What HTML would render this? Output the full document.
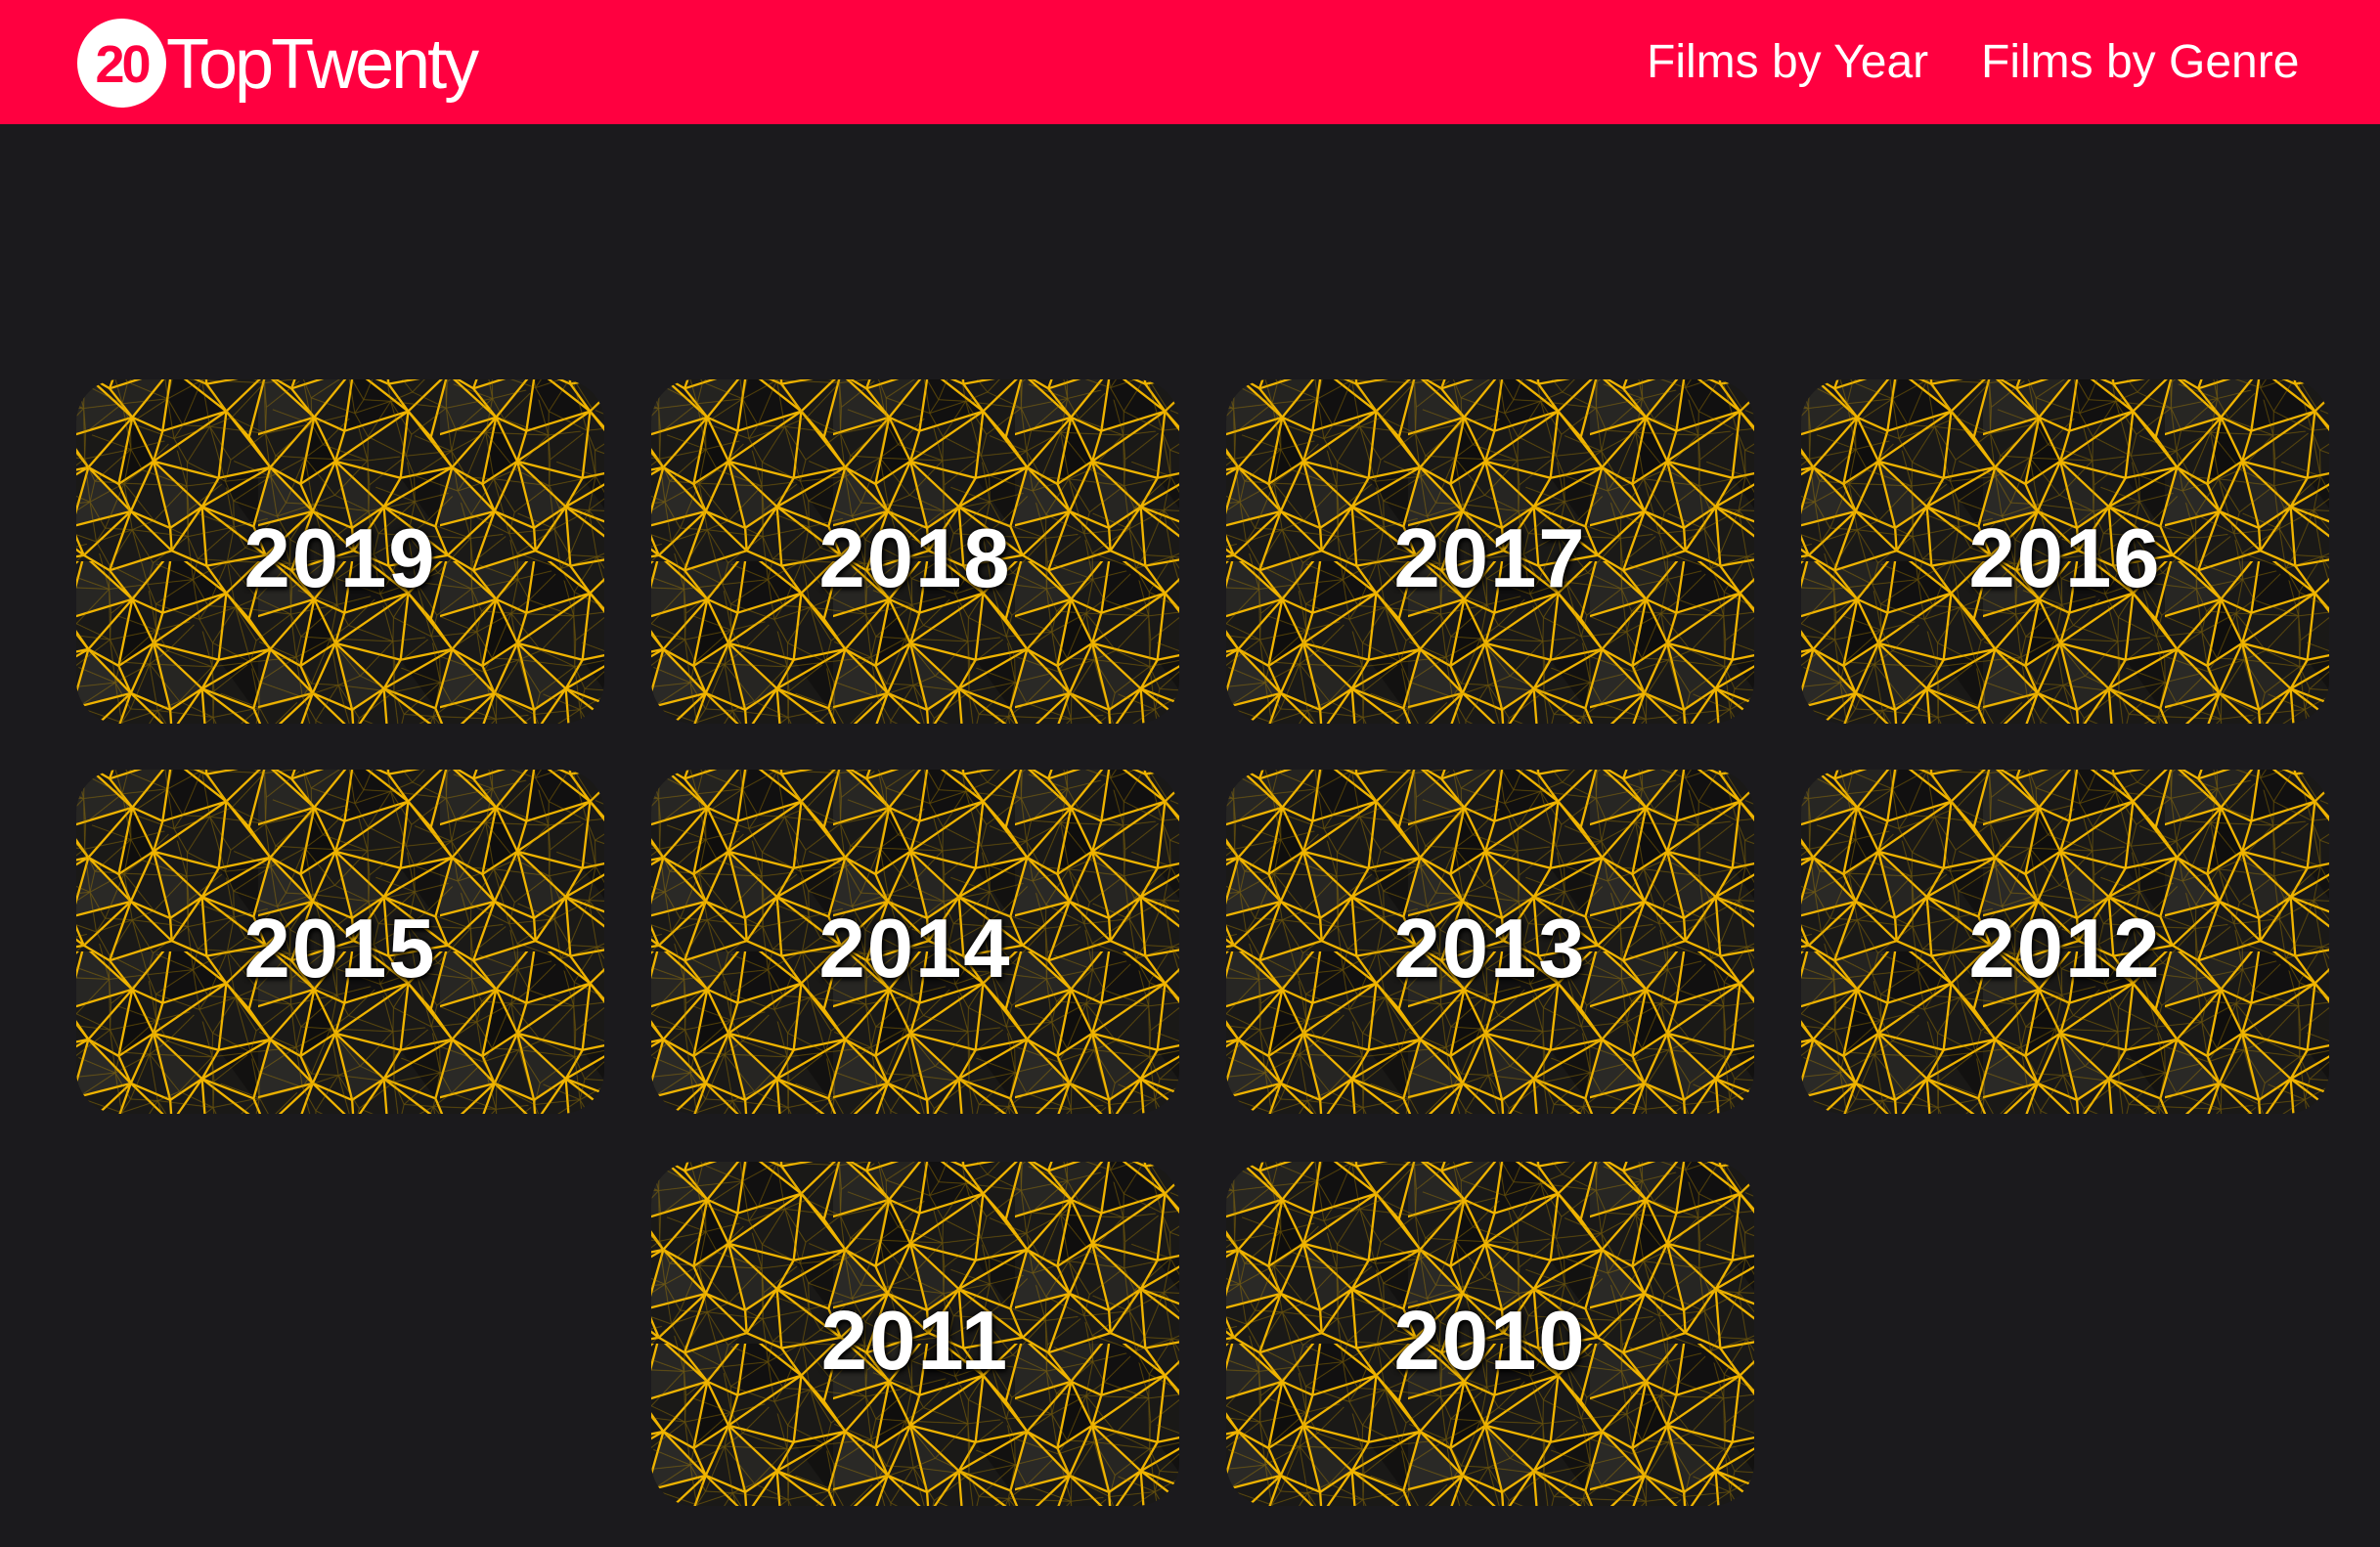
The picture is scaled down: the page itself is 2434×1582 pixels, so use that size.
<!DOCTYPE html>
<html><head><meta charset="utf-8">
<style>
html,body{margin:0;padding:0;}
body{width:2434px;height:1582px;background:#1b1a1d;position:relative;overflow:hidden;font-family:"Liberation Sans",sans-serif;}
.hdr{position:absolute;left:0;top:0;width:2434px;height:127px;background:#ff0040;}
.logo{position:absolute;left:79px;top:19px;width:91px;height:91px;border-radius:50%;background:#fff;}
.logo span{position:absolute;left:0;top:0;width:91px;line-height:91px;text-align:center;color:#ff0040;font-weight:bold;font-size:54px;letter-spacing:-3px;margin-top:2px;}
.brand{position:absolute;left:170px;top:18px;color:#fff;font-size:72px;letter-spacing:-3px;line-height:96px;}
.nav{position:absolute;top:34px;color:#fff;font-size:48px;line-height:60px;}
.card{position:absolute;width:540px;height:352px;border-radius:44px;overflow:hidden;background:#1a1917;}
.card svg{position:absolute;left:0;top:0;}
.card .y{position:absolute;left:0;top:0;width:540px;height:352px;line-height:368px;text-align:center;color:#fff;font-weight:bold;font-size:85px;letter-spacing:2px;text-shadow:0 0 6px rgba(0,0,0,.9),2px 3px 4px rgba(0,0,0,.8);}
</style></head><body>
<svg width="0" height="0" style="position:absolute">
<defs>
<g id="mesh" fill="none" stroke-linejoin="round">
<polyline points="-37,-36 -3,-23 36,-33 62,-22 83,-36 117,-23"/>
<polyline points="-34,3 5,-4 22,6 63,-7 86,3 125,-4"/>
<polyline points="-21,21 -6,38 37,25 57,34 99,21 114,38"/>
<polyline points="-26,65 8,58 28,69 51,54 94,65 128,58"/>
<polyline points="-37,84 -3,97 36,87 62,98 83,84 117,97"/>
<polyline points="-34,123 5,116 22,126 63,113 86,123 125,116"/>
<polyline points="-37,-36 -34,3 -21,21 -26,65 -37,84 -34,123"/>
<polyline points="-3,-23 5,-4 -6,38 8,58 -3,97 5,116"/>
<polyline points="36,-33 22,6 37,25 28,69 36,87 22,126"/>
<polyline points="62,-22 63,-7 57,34 51,54 62,98 63,113"/>
<polyline points="83,-36 86,3 99,21 94,65 83,84 86,123"/>
<polyline points="117,-23 125,-4 114,38 128,58 117,97 125,116"/>
<path d="M-37,-36L5,-4M36,-33L5,-4M36,-33L63,-7M83,-36L63,-7M83,-36L125,-4
M5,-4L-21,21M5,-4L37,25M63,-7L37,25M63,-7L99,21M125,-4L99,21
M-21,21L8,58M37,25L8,58M37,25L51,54M99,21L51,54M99,21L128,58
M8,58L-37,84M8,58L36,87M51,54L36,87M51,54L83,84M128,58L83,84
M-37,84L5,116M36,87L5,116M36,87L63,113M83,84L63,113M83,84L125,116"/>
</g>
<pattern id="pA" width="120" height="120" patternUnits="userSpaceOnUse" patternTransform="scale(1.55)">
<rect width="120" height="120" fill="#1a1917"/>
<polygon points="5,-4 37,25 -6,38" fill="#272623"/>
<polygon points="63,-7 99,21 57,34" fill="#111010"/>
<polygon points="8,58 36,87 -3,97" fill="#2a2926"/>
<polygon points="51,54 83,84 62,98" fill="#262522"/>
<polygon points="94,65 128,58 117,97" fill="#121110"/>
<polygon points="37,25 51,54 28,69" fill="#0f0e0d"/>
<polygon points="22,6 63,-7 37,25" fill="#242320"/>
<use href="#mesh" stroke="#f0b400" stroke-width="1.5"/>
</pattern>
<pattern id="pB" width="120" height="120" patternUnits="userSpaceOnUse" patternTransform="translate(40,25) rotate(37) scale(1.1)">
<use href="#mesh" stroke="#b88c00" stroke-width="0.8" opacity="0.45"/>
</pattern>
</defs>
</svg>

<div class="hdr">
  <div class="logo"><span>20</span></div>
  <div class="brand">TopTwenty</div>
  <div class="nav" style="left:1684px">Films by Year</div>
  <div class="nav" style="left:2026px">Films by Genre</div>
</div>

<div class="card" style="left:78px;top:388px"><svg width="540" height="352"><rect width="540" height="352" fill="url(#pA)"/><rect width="540" height="352" fill="url(#pB)"/></svg><div class="y">2019</div></div>
<div class="card" style="left:666px;top:388px"><svg width="540" height="352"><rect width="540" height="352" fill="url(#pA)"/><rect width="540" height="352" fill="url(#pB)"/></svg><div class="y">2018</div></div>
<div class="card" style="left:1254px;top:388px"><svg width="540" height="352"><rect width="540" height="352" fill="url(#pA)"/><rect width="540" height="352" fill="url(#pB)"/></svg><div class="y">2017</div></div>
<div class="card" style="left:1842px;top:388px"><svg width="540" height="352"><rect width="540" height="352" fill="url(#pA)"/><rect width="540" height="352" fill="url(#pB)"/></svg><div class="y">2016</div></div>

<div class="card" style="left:78px;top:787px"><svg width="540" height="352"><rect width="540" height="352" fill="url(#pA)"/><rect width="540" height="352" fill="url(#pB)"/></svg><div class="y">2015</div></div>
<div class="card" style="left:666px;top:787px"><svg width="540" height="352"><rect width="540" height="352" fill="url(#pA)"/><rect width="540" height="352" fill="url(#pB)"/></svg><div class="y">2014</div></div>
<div class="card" style="left:1254px;top:787px"><svg width="540" height="352"><rect width="540" height="352" fill="url(#pA)"/><rect width="540" height="352" fill="url(#pB)"/></svg><div class="y">2013</div></div>
<div class="card" style="left:1842px;top:787px"><svg width="540" height="352"><rect width="540" height="352" fill="url(#pA)"/><rect width="540" height="352" fill="url(#pB)"/></svg><div class="y">2012</div></div>

<div class="card" style="left:666px;top:1188px"><svg width="540" height="352"><rect width="540" height="352" fill="url(#pA)"/><rect width="540" height="352" fill="url(#pB)"/></svg><div class="y">2011</div></div>
<div class="card" style="left:1254px;top:1188px"><svg width="540" height="352"><rect width="540" height="352" fill="url(#pA)"/><rect width="540" height="352" fill="url(#pB)"/></svg><div class="y">2010</div></div>
</body></html>
